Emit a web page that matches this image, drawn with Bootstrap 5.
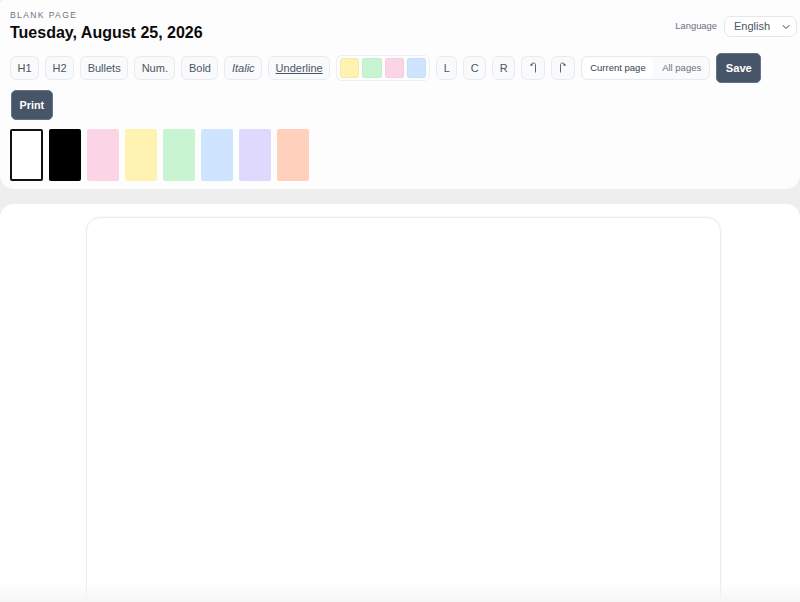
<!DOCTYPE html>
<html lang="en">
<head>
  <meta charset="UTF-8">
  <title>Blank Page</title>
  <meta name="viewport" content="width=device-width, initial-scale=1">
  <link href="https://cdn.jsdelivr.net/npm/bootstrap@5.3.3/dist/css/bootstrap.min.css" rel="stylesheet">
  <style>
    html, body { height: 100%; }
    body { background: #eeeeee; font-family: "Liberation Sans", Arial, sans-serif; overflow: hidden; color: #374151; }
    .top-panel { background: #fdfdfe; height: 189px; padding: 9px 10px 0; border-radius: 4px 0 14px 14px; }
    .top-head { height: 37px; }
    .eyebrow { font-size: 8.5px; letter-spacing: 1.4px; color: #6b7280; line-height: 11px; margin-top: 1px; }
    .day-title { font-size: 16px; font-weight: 700; color: #0b0b0b; line-height: 20px; margin: 2px 0 0; }
    .lang-wrap { margin: 7px -7px 0 0; gap: 7px; }
    .lang-label { font-size: 9.4px; color: #6b7280; }
    .lang-select { width: 73px; height: 21px; font-size: 11px; padding: 0 0 0 9px; border-radius: 7px; border-color: #e5e7eb; color: #4b5563; background-position: right 5px center; background-size: 10px 8px; font-family: inherit; }
    .tool-row { column-gap: 6px; row-gap: 7px; margin-top: 7px; }
    .tool-btn { height: 24px; padding: 0 6.5px; font-size: 11px; line-height: 22px; color: #4b5563; background: #f8fafc; border: 1px solid #e8ebf0; border-radius: 6px; }
    .tool-btn svg { display: block; }
    .narrow-btn { padding: 0 6.5px; }
    .arrow-btn { padding: 0 7px; width: 24px; }
    .dark-btn { height: 30px; padding: 0 8.5px; font-size: 11.2px; font-weight: 700; line-height: 28px; color: #fff; background: #475569; border: 1px solid #64748b; border-radius: 5px; }
    .print-btn { padding: 0 7.5px; font-size: 10.8px; margin-left: 1px; }
    .mini-group { height: 26px; padding: 2px 3px; gap: 3px; background: #fdfdfe; border: 1px solid #edf0f4; border-radius: 6px; }
    .mini-swatch { width: 19.25px; height: 20px; padding: 0; border-radius: 3px; border: 1px solid rgba(0,0,0,.03); }
    .seg-group { height: 24px; padding: 1px; background: #f8fafc; border: 1px solid #e8ebf0; border-radius: 6px; width: 129px; }
    .seg-btn { height: 20px; padding: 0 7px; font-size: 9.5px; line-height: 20px; border: 0; border-radius: 5px; color: #6b7280; background: transparent; }
    .seg-btn.on { background: #fff; color: #374151; }
    .paper-row { gap: 6px; margin-top: 9px; }
    .paper-swatch { width: 32px; height: 52px; padding: 0; border: 0; border-radius: 2px; }
    .paper-swatch.picked { width: 33px; border: 2px solid #111; }
    .sheet-wrap { background: #fff; margin-top: 15px; height: 398px; border-radius: 14px 14px 0 0; padding: 13px 0 0 86px; position: relative; overflow: hidden; }
    .page-box { width: 635px; height: 400px; background: #fff; border: 1px solid #ebebeb; border-radius: 14px; box-shadow: 0 0 3px rgba(0,0,0,.05); }
    .fade-bottom { position: absolute; left: 0; right: 0; bottom: 0; height: 20px; background: linear-gradient(to bottom, rgba(245,245,245,0), #f6f6f6); }
  </style>
</head>
<body>
  <div class="top-panel">
    <div class="top-head d-flex justify-content-between align-items-start">
      <div>
        <div class="eyebrow text-uppercase">Blank page</div>
        <h1 class="day-title">Tuesday, August 25, 2026</h1>
      </div>
      <div class="lang-wrap d-flex align-items-center">
        <label class="lang-label" for="lang">Language</label>
        <select id="lang" class="form-select lang-select"><option>English</option></select>
      </div>
    </div>

    <div class="tool-row d-flex flex-wrap align-items-center">
      <button class="btn tool-btn">H1</button>
      <button class="btn tool-btn">H2</button>
      <button class="btn tool-btn">Bullets</button>
      <button class="btn tool-btn">Num.</button>
      <button class="btn tool-btn">Bold</button>
      <button class="btn tool-btn fst-italic">Italic</button>
      <button class="btn tool-btn text-decoration-underline">Underline</button>
      <div class="mini-group d-flex">
        <button class="btn mini-swatch" style="background:#fef3b0"></button>
        <button class="btn mini-swatch" style="background:#c9f4d2"></button>
        <button class="btn mini-swatch" style="background:#fbd5e5"></button>
        <button class="btn mini-swatch" style="background:#cfe5ff"></button>
      </div>
      <button class="btn tool-btn narrow-btn">L</button>
      <button class="btn tool-btn narrow-btn">C</button>
      <button class="btn tool-btn narrow-btn">R</button>
      <button class="btn tool-btn arrow-btn" aria-label="Undo">
        <svg width="8" height="12" viewBox="0 0 8 12" fill="none" stroke="#4b5563" stroke-width=".9"><path d="M6.5 10.5V2.8C6.5 1.6 5.7 1 4.6 1C3.5 1 2.8 1.5 2.6 2.5"/><path d="M.8 3.6h3.4L2.5 1.6z" fill="#374151" stroke="none"/></svg>
      </button>
      <button class="btn tool-btn arrow-btn" aria-label="Redo">
        <svg width="8" height="12" viewBox="0 0 8 12" fill="none" stroke="#4b5563" stroke-width=".9"><path d="M1.5 10.5V2.8C1.5 1.6 2.3 1 3.4 1C4.5 1 5.2 1.5 5.4 2.5"/><path d="M7.2 3.6H3.8l1.7-2z" fill="#374151" stroke="none"/></svg>
      </button>
      <div class="seg-group d-flex justify-content-between">
        <button class="btn seg-btn on">Current page</button>
        <button class="btn seg-btn">All pages</button>
      </div>
      <button class="btn dark-btn">Save</button>
      <button class="btn dark-btn print-btn">Print</button>
    </div>

    <div class="paper-row d-flex">
      <button class="btn paper-swatch picked" style="background:#fff"></button>
      <button class="btn paper-swatch" style="background:#000"></button>
      <button class="btn paper-swatch" style="background:#fbd5e5"></button>
      <button class="btn paper-swatch" style="background:#fef3b0"></button>
      <button class="btn paper-swatch" style="background:#c9f4d2"></button>
      <button class="btn paper-swatch" style="background:#cfe5ff"></button>
      <button class="btn paper-swatch" style="background:#e0d9fe"></button>
      <button class="btn paper-swatch" style="background:#ffd0bb"></button>
    </div>
  </div>

  <div class="sheet-wrap">
    <div class="page-box"></div>
    <div class="fade-bottom"></div>
  </div>
  <script src="https://cdn.jsdelivr.net/npm/bootstrap@5.3.3/dist/js/bootstrap.bundle.min.js"></script>
</body>
</html>
